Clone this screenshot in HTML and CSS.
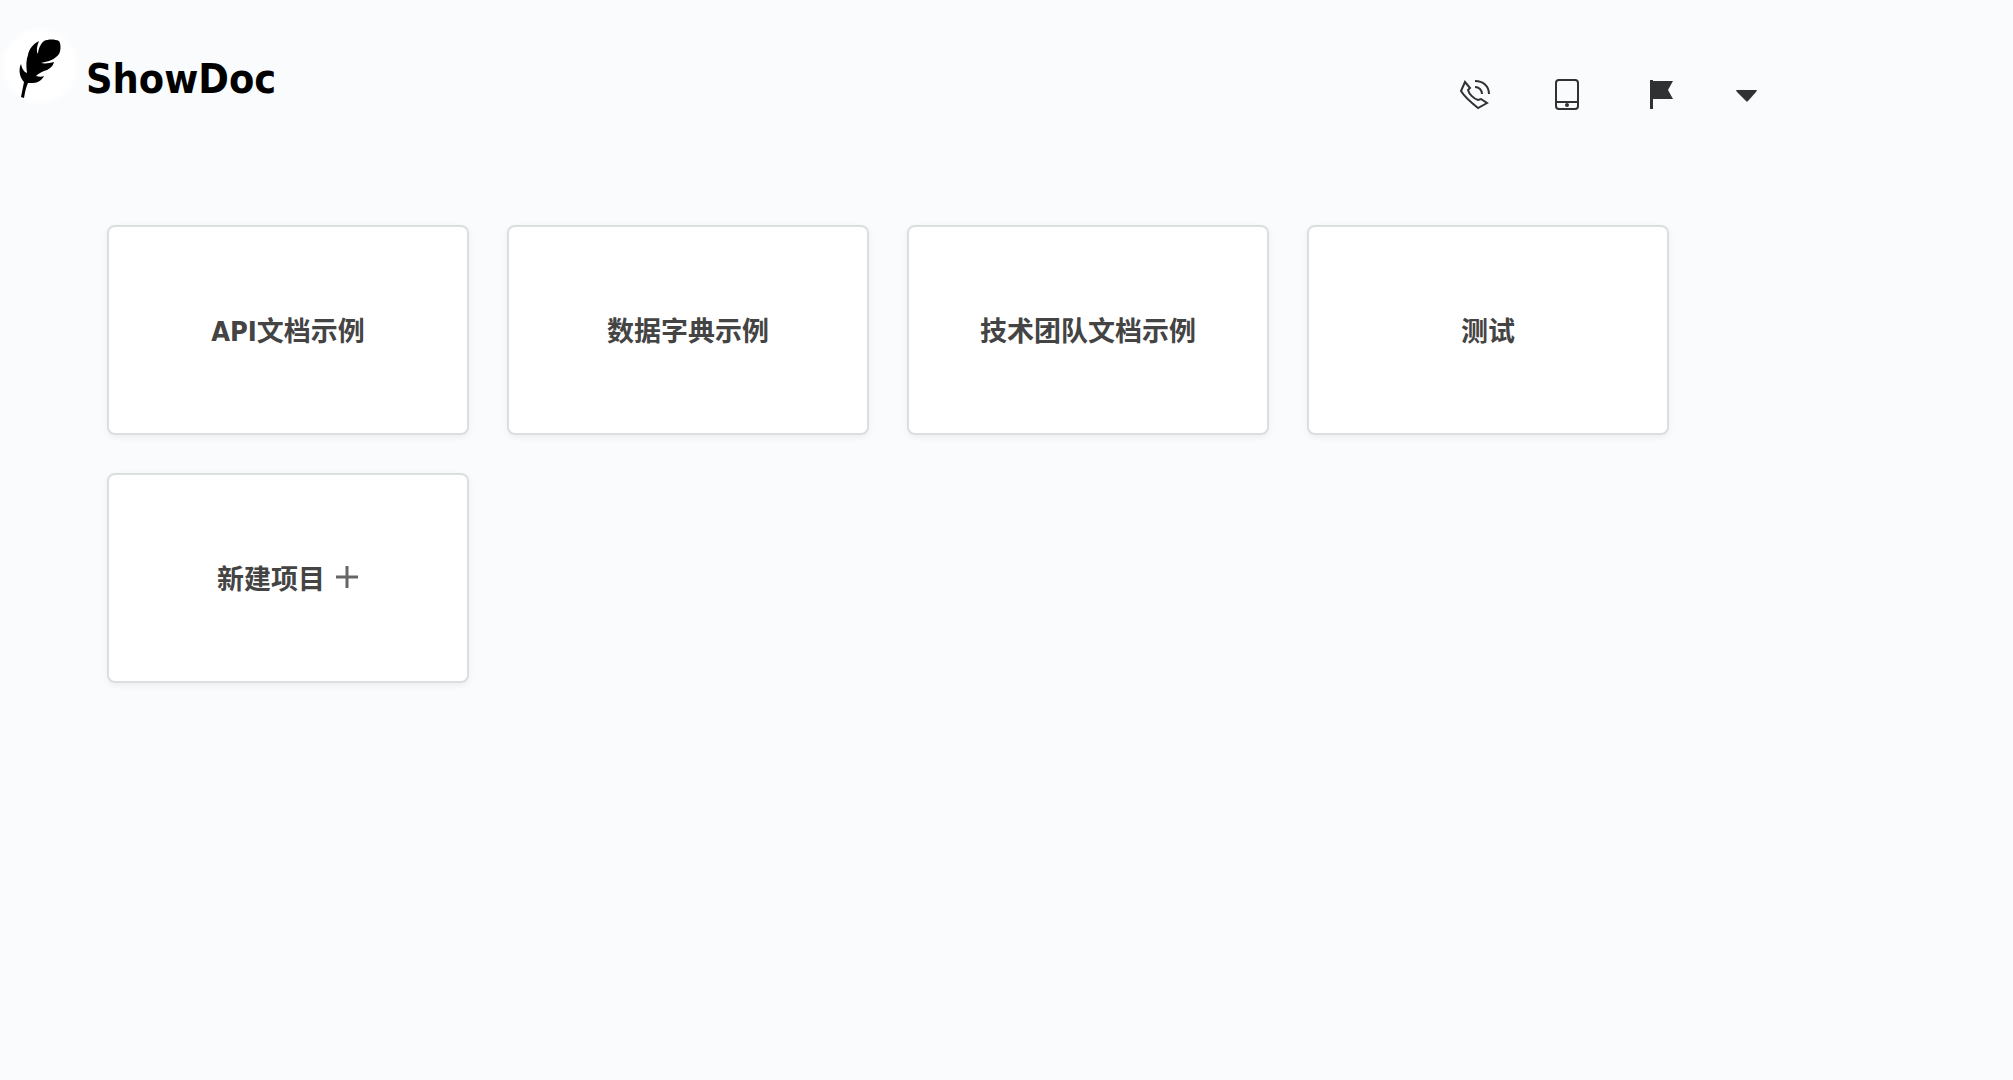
FILE: index.html
```
<!DOCTYPE html>
<html lang="zh-CN">
<head>
  <meta charset="utf-8">
  <title>ShowDoc</title>
  <link rel="stylesheet" href="styles.css">
</head>
<body>
  <header class="header">
    <a class="brand" href="#">
      <span class="logo">
        <svg width="80" height="80" viewBox="0 0 80 80" aria-hidden="true">
          <path d="M44 15 C48 13 55 13 59 15 C61 18 61 24 59 28 C56 32 51 35 45 36 L41 37 C45 38 50 37 54 36 C53 41 48 44 44 45 C41 46 38 48 36 50 C39 51 42 51 44 50 C42 54 38 57 33 57 L28 57 C26 61 25 66 24 72 L21 71 L24 56 C20 52 18 44 21 38 C22 43 24 46 27 47 C26 40 26 34 28 29 C29 23 33 18 39 15 C37 20 36 25 38 28 C38 24 40 18 44 15 Z" />
        </svg>
      </span>
      <h1>ShowDoc</h1>
    </a>
    <nav class="tools">
      <button type="button" aria-label="联系我们">
        <svg width="32" height="32" viewBox="0 0 32 32" fill="none" stroke="#303133" stroke-width="2">
          <path d="M6 4 L11 10 L9 12 C10 16 15 21 19 22 L22 21 L28 25 L19 30 C14 26 5 18 2 13 Z" />
          <path d="M16 3 C24 3 30 8 30 16 M16 9 C20 9 23 12 23 16" />
        </svg>
      </button>
      <button type="button" aria-label="手机客户端">
        <svg width="32" height="32" viewBox="0 0 32 32">
          <rect x="6" y="2" width="22" height="29" rx="3" fill="none" stroke="#303133" stroke-width="2" />
          <path d="M6 24 H28" stroke="#303133" stroke-width="2" />
          <circle cx="17" cy="27" r="2" fill="#303133" />
        </svg>
      </button>
      <button type="button" aria-label="旗帜">
        <svg width="32" height="32" viewBox="0 0 32 32" fill="#303133">
          <path d="M9 2 H12 V3 H32 L27 12 L32 21 H12 V31 H9 Z" />
        </svg>
      </button>
      <button type="button" aria-label="更多">
        <svg width="32" height="32" viewBox="0 0 32 32" fill="#303133">
          <path d="M4 12 H25 L24 14 L16 23 Q15 24 14 23 L5 14 Z" />
        </svg>
      </button>
    </nav>
  </header>

  <main class="item-list">
    <a class="item" href="#">API文档示例</a>
    <a class="item" href="#">数据字典示例</a>
    <a class="item" href="#">技术团队文档示例</a>
    <a class="item" href="#">测试</a>
    <a class="item" href="#">
      新建项目
      <svg class="plus" width="24" height="24" viewBox="0 0 24 24" aria-hidden="true">
        <path d="M12 1 V23 M1 12 H23" stroke="#666" stroke-width="3" />
      </svg>
    </a>
  </main>
</body>
</html>
```
FILE: styles.css
```
body {
  margin: 0;
  background-color: #f9fbfd;
  font-family: "DejaVu Sans Condensed", "Noto Sans CJK SC", sans-serif;
}

a {
  color: inherit;
  text-decoration: none;
}

.header {
  display: flex;
  justify-content: space-between;
  align-items: flex-start;
  padding: 26px 249px 0 0;
}

.brand {
  display: flex;
  gap: 6px;
  color: #000;
}

.logo {
  height: 80px;
  border-radius: 50%;
  background: radial-gradient(closest-side, #fff 85%, #f9fbfd);
}

h1 {
  margin: 29px 0 0;
  font-size: 41px;
  line-height: 48px;
}

.tools {
  display: flex;
  gap: 59px;
  margin-top: 52px;
}

.tools button {
  padding: 0;
  border: none;
  background: none;
  cursor: pointer;
}

.tools svg {
  display: block;
}

.item-list {
  display: grid;
  grid-template-columns: repeat(auto-fill, 362px);
  gap: 38px;
  padding: 115px 107px;
}

.item {
  display: flex;
  justify-content: center;
  align-items: center;
  gap: 10px;
  box-sizing: border-box;
  height: 210px;
  padding-bottom: 2px;
  border: 2px solid #dcdfe0;
  border-radius: 8px;
  background-color: #fff;
  box-shadow: 0 2px 6px rgba(0, 0, 0, 0.06);
  color: #444;
  font-size: 27px;
  font-weight: bold;
}

.item:hover {
  box-shadow: 0 2px 12px rgba(0, 0, 0, 0.15);
}
```
